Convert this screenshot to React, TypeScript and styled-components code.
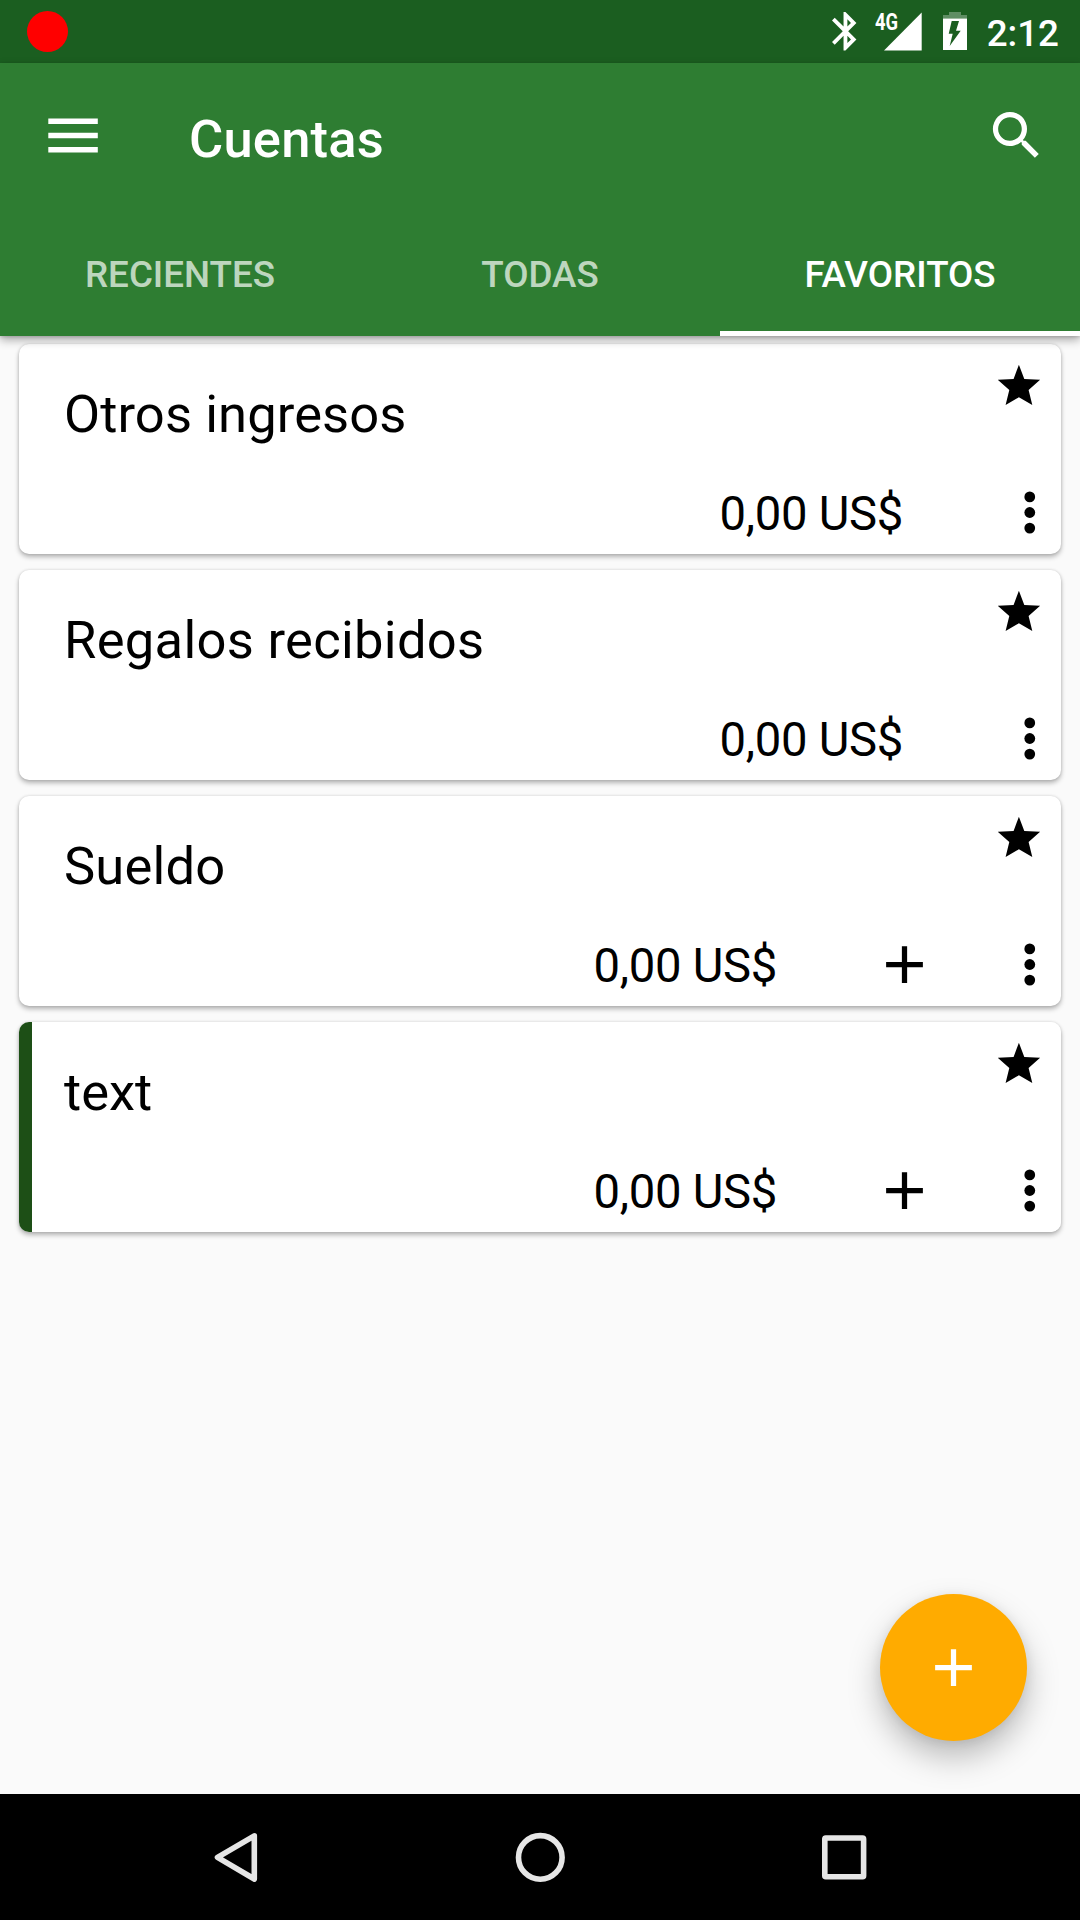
import React from "react";
import styled, { createGlobalStyle } from "styled-components";

const GlobalStyle = createGlobalStyle`
  * { box-sizing: border-box; }
  body { margin: 0; background: #fafafa; }
`;

const Screen = styled.div`
  width: 1080px;
  height: 1920px;
  display: flex;
  flex-direction: column;
  overflow: hidden;
  background: #fafafa;
  color: #000;
  font-family: Roboto, "Liberation Sans", sans-serif;
`;

const StatusBar = styled.div`
  height: 63px;
  flex: none;
  display: flex;
  align-items: center;
  justify-content: space-between;
  padding: 0 21px 0 27px;
  background: #1b5e20;
  color: #fff;
`;

const RecordDot = styled.div`
  width: 41px;
  height: 41px;
  border-radius: 50%;
  background: #f00;
`;

const StatusIcons = styled.div`
  display: flex;
  align-items: flex-start;
  height: 63px;
  padding-top: 12px;
`;

const Signal = styled.div`
  display: flex;
  width: 47px;
  margin-left: 18px;
`;

const NetworkType = styled.span`
  width: 9px;
  flex: none;
  font-size: 23px;
  line-height: 21px;
  font-weight: 700;
  white-space: nowrap;
  transform: scaleX(0.8);
  transform-origin: 0 0;
`;

const Battery = styled.svg`
  margin-left: 21px;
`;

const Clock = styled.span`
  margin-left: 19.5px;
  font-size: 36.75px;
  font-weight: 500;
  line-height: 43px;
`;

const Header = styled.header`
  height: 273px;
  flex: none;
  position: relative;
  z-index: 1;
  background: #2e7d32;
  color: #fff;
  box-shadow: 0 4px 9px rgba(0, 0, 0, 0.32), 0 1px 3px rgba(0, 0, 0, 0.15);
`;

const Toolbar = styled.div`
  height: 147px;
  display: flex;
  align-items: center;
  padding: 0 32px 2px 48px;
`;

const Title = styled.h1`
  flex: 1;
  margin: 0;
  padding: 7px 0 0 91px;
  font-size: 52.5px;
  font-weight: 500;
  line-height: 62px;
  letter-spacing: 0.2px;
`;

const Tabs = styled.nav`
  height: 126px;
  display: grid;
  grid-template-columns: repeat(3, 1fr);
`;

const Tab = styled.button<{ $active: boolean }>`
  display: flex;
  align-items: center;
  justify-content: center;
  border: 0;
  padding: 7px 0 0;
  background: none;
  border-bottom: 5px solid ${(p) => (p.$active ? "#fff" : "transparent")};
  color: ${(p) => (p.$active ? "#fff" : "rgba(255, 255, 255, 0.7)")};
  font: 500 36.75px/43px Roboto, "Liberation Sans", sans-serif;
`;

const Content = styled.main`
  flex: 1;
  display: flex;
  flex-direction: column;
  gap: 16px;
  padding: 8px 19px 0;
  position: relative;
`;

const Card = styled.article<{ $accent?: string }>`
  height: 210px;
  flex: none;
  display: grid;
  grid-template-rows: 126px 84px;
  border-radius: 10px;
  background: ${(p) =>
    p.$accent ? `linear-gradient(to right, ${p.$accent} 13px, #fff 13px)` : "#fff"};
  box-shadow: 0 3px 5px rgba(0, 0, 0, 0.28), 0 0 3px rgba(0, 0, 0, 0.14);
`;

const CardTop = styled.div`
  display: flex;
  justify-content: space-between;
  padding: 0 20px 0 45px;
`;

const Name = styled.h2<{ $tracking: number }>`
  margin: 0;
  padding-top: 39px;
  font-size: 52.5px;
  font-weight: 400;
  line-height: 62px;
  letter-spacing: ${(p) => p.$tracking}px;
`;

const Star = styled.svg`
  margin-top: 20px;
`;

const CardActions = styled.div`
  display: flex;
  align-items: center;
  justify-content: flex-end;
`;

const Amount = styled.span`
  padding-top: 4px;
  margin-right: 64px;
  font-size: 47.25px;
  line-height: 56px;
  letter-spacing: -0.3px;
`;

const CardButton = styled.button<{ $edge?: boolean }>`
  width: ${(p) => (p.$edge ? 94 : 126)}px;
  height: 84px;
  display: flex;
  align-items: center;
  justify-content: ${(p) => (p.$edge ? "flex-end" : "center")};
  padding: 0;
  border: 0;
  background: none;
`;

const Fab = styled.button`
  position: absolute;
  right: 53px;
  bottom: 53px;
  width: 147px;
  height: 147px;
  display: flex;
  align-items: center;
  justify-content: center;
  padding: 0;
  border: 0;
  border-radius: 50%;
  background: #ffab00;
  box-shadow: 0 16px 32px rgba(0, 0, 0, 0.26), 0 2px 12px rgba(0, 0, 0, 0.08);
`;

const NavBar = styled.footer`
  height: 126px;
  flex: none;
  position: relative;
  display: flex;
  align-items: center;
  justify-content: space-between;
  padding: 0 205px 0 206px;
  background: #000;
`;

const NavIcon = styled.svg`
  fill: none;
  stroke: #e6e6e6;
  stroke-width: 5.6;
  stroke-linejoin: round;
`;

type Account = {
  name: string;
  tracking: number;
  canAdd?: boolean;
  accent?: string;
};

const accounts: Account[] = [
  { name: "Otros ingresos", tracking: 0.1 },
  { name: "Regalos recibidos", tracking: 0.3 },
  { name: "Sueldo", tracking: 0.2, canAdd: true },
  { name: "text", tracking: 0, canAdd: true, accent: "#1d4f16" },
];

const tabs = ["RECIENTES", "TODAS", "FAVORITOS"];

const PlusIcon = ({ color }: { color: string }) => (
  <svg width="63" height="63" viewBox="0 0 24 24" fill={color}>
    <path d="M19 13h-6v6h-2v-6H5v-2h6V5h2v6h6v2z" />
  </svg>
);

export default function App() {
  return (
    <Screen>
      <GlobalStyle />
      <StatusBar>
        <RecordDot />
        <StatusIcons>
          <svg width="25" height="39" viewBox="5 2 13 20.3" fill="#fff">
            <path d="M17.71 7.71L12 2h-1v7.59L6.41 5 5 6.41 10.59 12 5 17.59 6.41 19 11 14.41V22h1l5.71-5.71-4.3-4.29 4.3-4.29zM13 5.83l1.88 1.88L13 9.59V5.83zm1.88 10.46L13 18.17v-3.76l1.88 1.88z" />
          </svg>
          <Signal>
            <NetworkType>4G</NetworkType>
            <svg width="38" height="39" viewBox="0 0 38 39" fill="#fff">
              <path d="M0 38.5H37.7V0.6Z" />
            </svg>
          </Signal>
          <Battery width="24" height="38" viewBox="0 0 24 38" fill="#fff">
            <path fillOpacity=".3" d="M6 0h12v3h6v3.6H0V3h6z" />
            <path
              fillRule="evenodd"
              d="M0 6.6h24V38H0zM8.7 9 5.7 21.7H9.7L6.7 34 17.7 18.7H13L16 9z"
            />
          </Battery>
          <Clock>2:12</Clock>
        </StatusIcons>
      </StatusBar>

      <Header>
        <Toolbar>
          <svg width="50" height="35" viewBox="0 0 50 35" fill="#fff">
            <path d="M.3 .5h49.5v5.4H.3zM.3 14.8h49.5v5.4H.3zM.3 29h49.5v5.4H.3z" />
          </svg>
          <Title>Cuentas</Title>
          <svg width="63" height="63" viewBox="0 0 24 24" fill="#fff">
            <path d="M15.5 14h-.79l-.28-.27A6.471 6.471 0 0 0 16 9.5 6.5 6.5 0 1 0 9.5 16c1.61 0 3.09-.59 4.23-1.57l.27.28v.79l5 4.99L20.49 19l-4.99-5zm-6 0C7.01 14 5 11.99 5 9.5S7.01 5 9.5 5 14 7.01 14 9.5 11.99 14 9.5 14z" />
          </svg>
        </Toolbar>
        <Tabs>
          {tabs.map((tab, i) => (
            <Tab key={tab} $active={i === 2}>
              {tab}
            </Tab>
          ))}
        </Tabs>
      </Header>

      <Content>
        {accounts.map((account) => (
          <Card key={account.name} $accent={account.accent}>
            <CardTop>
              <Name $tracking={account.tracking}>{account.name}</Name>
              <Star width="43" height="42" viewBox="0.3 0.3 43 42">
                <path d="M21.2 1 26.6 15.2 42.4 16 30.9 26.3 34.6 41.4 21.2 33.5 7.9 41.4 11.6 26.3 0 16 15.9 15.2Z" />
              </Star>
            </CardTop>
            <CardActions>
              <Amount>0,00 US$</Amount>
              {account.canAdd && (
                <CardButton>
                  <PlusIcon color="#000" />
                </CardButton>
              )}
              <CardButton $edge>
                <svg width="63" height="63" viewBox="-12 -12 24 24">
                  <circle cx=".1" cy="-5.95" r="2.05" />
                  <circle cx=".1" r="2.05" />
                  <circle cx=".1" cy="5.95" r="2.05" />
                </svg>
              </CardButton>
            </CardActions>
          </Card>
        ))}
        <Fab>
          <PlusIcon color="#fff" />
        </Fab>
      </Content>

      <NavBar>
        <NavIcon width="63" height="63" viewBox="0 0 63 63">
          <path d="M48.3 9.8 11.5 31.4 48.3 53Z" />
        </NavIcon>
        <NavIcon width="63" height="63" viewBox="0 0 63 63">
          <circle cx="31.3" cy="31.4" r="21.8" />
        </NavIcon>
        <NavIcon width="63" height="63" viewBox="0 0 63 63">
          <rect x="12.8" y="12" width="38.8" height="38.8" rx="1" />
        </NavIcon>
      </NavBar>
    </Screen>
  );
}
